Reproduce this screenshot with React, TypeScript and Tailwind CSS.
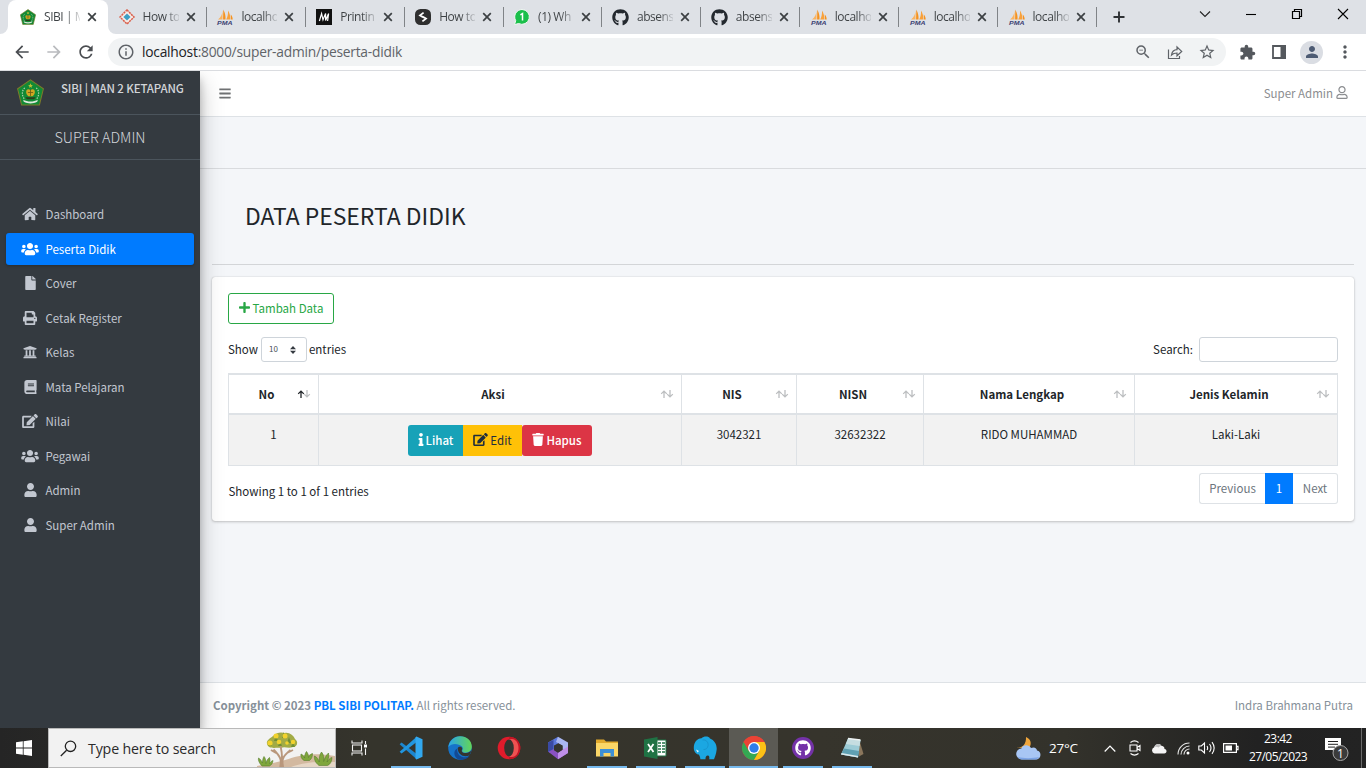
import React from "react";
import {
  FaBars, FaBook, FaEdit, FaFile, FaGithub, FaHome, FaInfo, FaPlus, FaPrint,
  FaRegUser, FaTrash, FaUniversity, FaUser, FaUsers,
} from "react-icons/fa";
import {
  MdArrowBack, MdArrowForward, MdExtension, MdInfoOutline, MdMoreVert, MdPerson,
  MdRefresh, MdStarBorder, MdZoomOut,
} from "react-icons/md";

/* ---------- favicons ---------- */

const Emblem = ({ className }: { className: string }) => (
  <svg viewBox="0 0 26 26" className={className}>
    <path d="M13 .8 25.400 9.400 21.600 25H4.400L.6 9.400Z" fill="#128a35" stroke="#7d7a2a" strokeWidth="1" />
    <path d="M6 20c4 2.300 10 2.300 14 0l-.5 2c-4 2-9 2-13 0Z" fill="#dfe9dc" />
    <path d="M9 11c1.200-1.500 2.800-1.200 4-.2 1.200-1 2.800-1.300 4 .2.8 2.500-.6 4.600-2 5.500h-4c-1.400-.9-2.800-3-2-5.500Z" fill="#d0a622" />
    <path d="M8 17.500h10l-1.500 2h-7Z" fill="#2b3d1c" />
    <path d="M13 10.500v6M10.500 13h5" stroke="#6f5c14" strokeWidth=".8" />
    <path d="m13 4.200.7 1.500 1.600.1-1.200 1.100.4 1.600L13 7.700l-1.500.8.4-1.600-1.200-1.100 1.600-.1Z" fill="#b9bf36" />
    <path d="M7.500 8.500C4.500 11 4.500 16 7 19M18.500 8.500c3 2.500 3 7.500.5 10.500" fill="none" stroke="#b8d6b4" strokeWidth="1.100" strokeDasharray="1.400 1.100" />
  </svg>
);

const Diamond = () => (
  <svg viewBox="0 0 16 16" className="h-4 w-4">
    <path d="M8 1 15 8 8 15 1 8Z" fill="#f7ece8" stroke="#d9604c" strokeWidth="1.500" strokeDasharray="2.200 .7" />
    <path d="M8 4.400 11.600 8 8 11.600 4.400 8Z" fill="#3d9fc4" />
  </svg>
);

const Pma = () => (
  <svg viewBox="0 0 18 16" className="h-4 w-[18px]">
    <path d="M6.500 1.200C6.600 5 4.800 8.600 2 10.400h4.500Z" fill="#fbb35f" />
    <path d="M7.300.4c2 3.600 2.400 7 2.200 10H7.100Z" fill="#f6921e" />
    <path d="M12 1.600c1.600 2.400 2.500 5.800 2.400 8.800H10.200C11.700 8 12.200 5 12 1.600Z" fill="#f9a13a" />
    <path d="M14.700 5.500c1.300 1.200 1.900 3 2 4.900h-1.700Z" fill="#f6921e" />
    <text x="1" y="15.800" textLength="15.500" lengthAdjust="spacingAndGlyphs" className="fill-[#3c4173]" fontFamily="Liberation Sans, sans-serif" fontSize="6" fontWeight="700" fontStyle="italic">PMA</text>
  </svg>
);

const MSquare = () => (
  <svg viewBox="0 0 16 16" className="h-4 w-4">
    <rect width="16" height="16" fill="#111" />
    <path d="M3.400 12 5.600 4.600 7 10.800 9.600 4.600V11.400L12.600 4.600 11.600 12" fill="none" stroke="#fff" strokeWidth="1.200" />
  </svg>
);

const SRound = () => (
  <svg viewBox="0 0 16 16" className="h-4 w-4">
    <rect width="16" height="16" rx="5.500" fill="#2f2f2f" />
    <path d="M8.600 3.600 5 6.400 7.600 8M7.400 12.400 11 9.600 8.400 8M6.600 7.400 9.400 8.600" fill="none" stroke="#fff" strokeWidth="1.800" />
  </svg>
);

const WhatsAppBadge = () => (
  <svg viewBox="0 0 16 16" className="h-4 w-4">
    <path d="M8 .5a7.400 7.400 0 1 1-3.400 14L.6 15.600 1.700 11.600A7.400 7.400 0 0 1 8 .5Z" fill="#1bbf4b" stroke="#f4f7f5" strokeWidth="1" />
    <path d="M6.400 5.800 8.500 4.500V11.500" fill="none" stroke="#fff" strokeWidth="1.500" />
  </svg>
);

const Octocat = () => <FaGithub className="h-[17px] w-[17px] text-[#24292f]" />;

/* ---------- browser chrome ---------- */

const CloseX = () => (
  <svg viewBox="0 0 10 10" className="h-2.5 w-2.5 shrink-0">
    <path d="M1.200 1.200 8.800 8.800M8.800 1.200 1.200 8.800" stroke="#3c4043" strokeWidth="1.700" />
  </svg>
);

const tabs: { icon: React.ReactNode; text: string }[] = [
  { icon: <Diamond />, text: "How to" },
  { icon: <Pma />, text: "localho" },
  { icon: <MSquare />, text: "Printin" },
  { icon: <SRound />, text: "How to" },
  { icon: <WhatsAppBadge />, text: "(1) Wh" },
  { icon: <Octocat />, text: "absens" },
  { icon: <Octocat />, text: "absens" },
  { icon: <Pma />, text: "localho" },
  { icon: <Pma />, text: "localho" },
  { icon: <Pma />, text: "localho" },
];

const tabText =
  "ml-[7px] w-9 shrink-0 whitespace-nowrap bg-linear-to-r from-[#3c4043] from-60% to-[#3c4043]/15 bg-clip-text text-[12px] leading-4 tracking-[-0.45px] text-transparent";

function TabStrip() {
  return (
    <div className="flex h-[34px] shrink-0 bg-[#dee1e6] pl-2">
      <div className="relative flex w-[100px] shrink-0 items-center rounded-t-[8px] bg-white pl-3">
        <svg viewBox="0 0 8 8" className="absolute -left-2 bottom-0 h-2 w-2"><path d="M8 0V8H0A8 8 0 0 0 8 0Z" fill="#fff" /></svg>
        <svg viewBox="0 0 8 8" className="absolute -right-2 bottom-0 h-2 w-2"><path d="M0 0V8H8A8 8 0 0 1 0 0Z" fill="#fff" /></svg>
        <Emblem className="mr-px h-4 w-4" />
        <span className={tabText}>SIBI | M</span>
        <span className="ml-[7px] flex"><CloseX /></span>
      </div>
      {tabs.map((t, i) => (
        <div key={i} className="flex w-[98.9px] shrink-0 items-center">
          <div className="flex w-[97.9px] items-center pl-[9.500px]">
            <span className="flex w-[18px] shrink-0 justify-center">{t.icon}</span>
            <span className={tabText}>{t.text}</span>
            <span className="ml-[7px] flex"><CloseX /></span>
          </div>
          <div className="h-5 w-px bg-[#808387]" />
        </div>
      ))}
      <svg viewBox="0 0 12 12" className="ml-4 mt-[11px] h-3 w-3"><path d="M6 .5v11M.5 6h11" stroke="#2f3235" strokeWidth="1.900" /></svg>
      <div className="ml-auto flex pr-[17px] pt-[8px] text-black">
        <svg viewBox="0 0 12 12" className="h-3 w-3"><path d="m1 3.500 5 5 5-5" fill="none" stroke="#222" strokeWidth="1.100" /></svg>
        <svg viewBox="0 0 12 12" className="ml-[34px] h-3 w-3"><path d="M1 6.500h10" stroke="#000" strokeWidth="1.100" /></svg>
        <svg viewBox="0 0 12 12" className="ml-[34px] h-3 w-3"><path d="M1.500 3.500h7v7h-7ZM3.500 3.500v-2h7v7h-2" fill="none" stroke="#000" strokeWidth="1.200" /></svg>
        <svg viewBox="0 0 12 12" className="ml-[34px] h-3 w-3"><path d="m1 1 10 10M11 1 1 11" stroke="#000" strokeWidth="1.100" /></svg>
      </div>
    </div>
  );
}

function Toolbar() {
  return (
    <div className="flex h-[37px] shrink-0 items-center border-b border-[#dadce0] bg-white pl-3">
      <MdArrowBack className="h-5 w-5 text-[#4a4d51]" />
      <MdArrowForward className="ml-3 h-5 w-5 text-[#b9bbbe]" />
      <MdRefresh className="ml-3 h-5 w-5 text-[#4a4d51]" />
      <div className="ml-3 flex h-7 w-[1118px] items-center rounded-full bg-[#f1f3f4] pl-[9px] pr-2.5 text-[#5f6368]">
        <MdInfoOutline className="h-[18px] w-[18px]" />
        <span className="ml-[7px] whitespace-nowrap text-[13.800px] leading-5 tracking-[-0.240px]">
          <span className="text-[#202124]">localhost</span>:8000/super-admin/peserta-didik
        </span>
        <MdZoomOut className="ml-auto h-[18px] w-[18px]" />
        <svg viewBox="0 0 16 16" className="ml-[15px] h-4 w-4">
          <path d="M1.500 5.500v9h11V12M4.500 11c.6-3.500 2.500-5.200 5.500-5.300V3l4.700 4.400L10 11.800V9C7.600 9 5.800 9.700 4.500 11Z" fill="none" stroke="#5f6368" strokeWidth="1.200" />
        </svg>
        <MdStarBorder className="ml-[15px] h-[18px] w-[18px]" />
      </div>
      <MdExtension className="ml-[13px] h-[17px] w-[17px] text-[#54585d]" />
      <svg viewBox="0 0 14 14" className="ml-4 h-3.5 w-3.5"><path d="M1 1h12v12H1Z" fill="none" stroke="#54585d" strokeWidth="1.800" /><path d="M8.500 0H14v14H8.500Z" fill="#54585d" /></svg>
      <span className="ml-[14px] flex h-[23px] w-[23px] items-center justify-center rounded-full bg-[#dadde3]">
        <MdPerson className="h-[18px] w-[18px] text-[#4d5b73]" />
      </span>
      <MdMoreVert className="ml-[12px] h-5 w-5 text-[#54585d]" />
    </div>
  );
}

/* ---------- sidebar ---------- */

const menu: { label: string; icon: React.ReactNode; active?: boolean }[] = [
  { label: "Dashboard", icon: <FaHome className="h-3.5 w-4" /> },
  { label: "Peserta Didik", icon: <FaUsers className="h-3.5 w-[18px]" />, active: true },
  { label: "Cover", icon: <FaFile className="h-3.5 w-[11px]" /> },
  { label: "Cetak Register", icon: <FaPrint className="h-3.5 w-3.5" /> },
  { label: "Kelas", icon: <FaUniversity className="h-3.5 w-3.5" /> },
  { label: "Mata Pelajaran", icon: <FaBook className="h-3.5 w-[13px]" /> },
  { label: "Nilai", icon: <FaEdit className="h-3.5 w-4" /> },
  { label: "Pegawai", icon: <FaUsers className="h-3.5 w-[18px]" /> },
  { label: "Admin", icon: <FaUser className="h-3.5 w-[13px]" /> },
  { label: "Super Admin", icon: <FaUser className="h-3.5 w-[13px]" /> },
];

function Sidebar() {
  return (
    <aside className="relative z-10 flex w-[200px] shrink-0 flex-col bg-[#343a40] text-[#c2c7d0] shadow-[0_11px_22px_rgba(0,0,0,0.25),0_8px_8px_rgba(0,0,0,0.22)]">
      <div className="flex h-[44px] shrink-0 border-b border-[#4b545c] pl-[17px]">
        <Emblem className="mt-2 h-[27px] w-[27px]" />
        <span className="ml-[17px] mt-[8px] whitespace-nowrap text-[11.5px] font-medium leading-[18px] tracking-[-0.14px] text-[#d2d5d9]">SIBI | MAN 2 KETAPANG</span>
      </div>
      <div className="flex h-[45px] shrink-0 items-center justify-center border-b border-[#4b545c] text-[14.4px] font-light text-[#d2d5da]">SUPER ADMIN</div>
      <nav className="mt-[38px] flex flex-col gap-[2.5px] px-1.5">
        {menu.map((m) => (
          <a
            key={m.label}
            className={
              m.active
                ? "flex h-8 items-center rounded-[3px] bg-[#007bff] pl-[15px] text-white shadow-[0_1px_3px_rgba(0,0,0,0.24)]"
                : "flex h-8 items-center pl-[15px]"
            }
          >
            <span className="flex w-[18px] justify-center">{m.icon}</span>
            <span className="ml-[6.500px] whitespace-nowrap text-[11.5px] leading-4">{m.label}</span>
          </a>
        ))}
      </nav>
    </aside>
  );
}

/* ---------- table ---------- */

const SortArrows = ({ active }: { active?: boolean }) => (
  <svg viewBox="0 0 14 8" className="absolute right-[7px] top-[15px] h-2 w-3.5">
    <path d="M4 8V1.200M1.200 3.900 4 1.100 6.800 3.900" fill="none" stroke={active ? "#212529" : "#bcbec0"} strokeWidth="1.300" />
    <path d="M10 0v6.800M7.200 4.100 10 6.900l2.800-2.800" fill="none" stroke="#bcbec0" strokeWidth="1.300" />
  </svg>
);

const headers = ["No", "Aksi", "NIS", "NISN", "Nama Lengkap", "Jenis Kelamin"];
const cols = "grid grid-cols-[90px_363px_115px_127px_211px_203px]";

function DataTable() {
  return (
    <div className="w-[1110px] border-l border-[#dee2e6]">
      <div className={`${cols} h-[42px] border-y-2 border-[#dee2e6]`}>
        {headers.map((h, i) => (
          <div key={h} className="relative flex items-center justify-center border-r border-[#dee2e6] pr-[14px] pb-px font-bold">
            {h}
            <SortArrows active={i === 0} />
          </div>
        ))}
      </div>
      <div className={`${cols} h-[51px] border-b border-[#dee2e6] bg-[#f2f2f2] text-center`}>
        <div className="border-r border-[#dee2e6] pt-[9px]">1</div>
        <div className="flex justify-center border-r border-[#dee2e6] pt-[10px]">
          <button className="flex h-[31px] w-[55px] items-center justify-center rounded-l-[3px] bg-[#17a2b8] pb-0.5 font-medium text-white">
            <FaInfo className="mr-[2px] h-[13px] w-[6px]" />Lihat
          </button>
          <button className="flex h-[31px] w-[59px] items-center justify-center bg-[#ffc107] pb-0.5 text-[#1f2d3d]">
            <FaEdit className="mr-[2px] h-[13px] w-[15px]" />Edit
          </button>
          <button className="flex h-[31px] w-[70px] items-center justify-center rounded-[3px] bg-[#dc3545] pb-0.5 font-medium text-white">
            <FaTrash className="mr-[2px] h-[13px] w-[12px]" />Hapus
          </button>
        </div>
        <div className="border-r border-[#dee2e6] pt-[9px]">3042321</div>
        <div className="border-r border-[#dee2e6] pt-[9px]">32632322</div>
        <div className="border-r border-[#dee2e6] pt-[9px]">RIDO MUHAMMAD</div>
        <div className="border-r border-[#dee2e6] pt-[9px]">Laki-Laki</div>
      </div>
    </div>
  );
}

function Content() {
  return (
    <main className="flex min-w-0 flex-1 flex-col bg-[#f4f6f9] text-[11.5px] leading-[20px] text-[#212529]">
      <header className="flex h-[46px] shrink-0 items-center justify-between border-b border-[#dee2e6] bg-white pl-[19px] pr-[18px] text-[#8b8d90]">
        <FaBars className="h-[13px] w-3 text-[#6f7173]" />
        <span className="flex items-center gap-[3px] pb-0.5">
          Super Admin <FaRegUser className="h-[13px] w-[12px]" />
        </span>
      </header>
      <div className="h-[52px] shrink-0 border-b border-[#d9dbde]" />
      <div className="mx-3 flex h-[96px] shrink-0 items-center border-b border-[#d3d5d8] pb-1 pl-[33px]">
        <h1 className="whitespace-nowrap text-[22.9px] leading-8">DATA PESERTA DIDIK</h1>
      </div>
      <section className="mx-3 mt-3 h-[244px] shrink-0 rounded-[3px] bg-white px-4 pt-4 shadow-[0_0_1px_rgba(0,0,0,0.25),0_1px_3px_rgba(0,0,0,0.2)]">
        <button className="flex h-[31px] w-[106px] items-center justify-center rounded-[3px] border border-[#28a745] pb-0.5 text-[#28a745]">
          <FaPlus className="mr-[3px] h-[13px] w-[11px]" />Tambah Data
        </button>
        <div className="mt-[13px] flex h-[25px] items-center justify-between">
          <div className="flex items-center">
            <span className="pb-0.5">Show</span>
            <span className="ml-[3px] mr-0.5 flex h-[25px] w-[46px] items-center justify-between rounded-[3px] border border-[#ced4da] pl-[7px] pr-[10px] text-[8px] text-[#495057]">
              <span className="pb-0.5">10</span>
              <svg viewBox="0 0 6 8" className="h-2 w-1.5"><path d="M3 0 6 3.300H0ZM3 8 0 4.700H6Z" fill="#343a40" /></svg>
            </span>
            <span className="pb-0.5">entries</span>
          </div>
          <div className="flex items-center">
            <span className="pb-0.5">Search:</span>
            <span className="ml-1.5 h-[25px] w-[139px] rounded-[3px] border border-[#ced4da] bg-white" />
          </div>
        </div>
        <div className="mt-[11px]"><DataTable /></div>
        <div className="mt-[7px] flex justify-between">
          <span className="pt-[8px] pl-[0.5px]">Showing 1 to 1 of 1 entries</span>
          <div className="flex h-[31px] text-[#6c757d]">
            <span className="flex w-[66px] items-center justify-center rounded-l-[3px] border border-r-0 border-[#dee2e6] pb-px">Previous</span>
            <span className="flex w-[28px] items-center justify-center bg-[#007bff] pb-px text-white">1</span>
            <span className="flex w-[45px] items-center justify-center rounded-r-[3px] border border-l-0 border-[#dee2e6] pb-px">Next</span>
          </div>
        </div>
      </section>
      <footer className="mt-auto flex h-[46px] shrink-0 items-center justify-between border-t border-[#dee2e6] bg-white pb-0.5 pl-[13px] pr-[13px] text-[#869099]">
        <span className="tracking-[-0.02px]"><b>Copyright © 2023 <span className="text-[#007bff]">PBL SIBI POLITAP.</span></b> All rights reserved.</span>
        <span>Indra Brahmana Putra</span>
      </footer>
    </main>
  );
}

/* ---------- taskbar ---------- */

const Plants = () => (
  <svg viewBox="0 0 78 38" className="h-[38px] w-[78px]">
    <path d="M0 37c10-2 18-3 28-6 14-5 28-8 50-4v11H0Z" fill="#d3b9a0" />
    <path d="M34 38c10-4 26-6 44-5v5Z" fill="#e6d6c5" />
    <path d="M10 15c-1-4 4-6 6-8 4-4 8-4 12-3 4-1 9 3 10 6 4 3 2 8-2 8-5 2-8-1-12 1-5-1-12 2-14-4Z" fill="#a2ab45" />
    <g fill="#6f8f35"><path d="m11 17 2-5 2 5ZM17 12l2-6 2 6ZM25 9l1.500-6L28 9ZM30 14l2-6 2 6ZM34 18l2-5 2 5ZM21 17l2-5 2 5Z" /></g>
    <path d="M23.500 38c1-7 .5-10-7-17.500M25 38c-.6-9 2.500-12 8.500-17M24.800 30c.6-5-.3-8-1.300-13M19 24l-5-3M30 24l6-3" fill="none" stroke="#b9977c" strokeWidth="1.900" />
    <path d="M22.500 38 24 27h1.500l1.500 11Z" fill="#b9977c" />
    <g fill="#f2d22e"><circle cx="13" cy="14" r="2.600" /><circle cx="19" cy="7" r="2.500" /><circle cx="28" cy="7" r="2.500" /><circle cx="36" cy="13" r="2.200" /><circle cx="22" cy="13" r="2.300" /><circle cx="30" cy="14" r="1.800" /></g>
    <g fill="#7fa63c" stroke="#557d2c" strokeWidth=".6">
      <path d="M5 37C2 34 1 31 1.500 29c2 1 3 3 4 5 0-3 .5-5 1.500-6.500C8.500 29 9 32 9 34.500c.5-2.500 1.500-4.500 3.500-6 .8 2 .5 4 0 6 1-1.500 2-2.500 3.500-3-.3 2.500-1.500 4.500-3.500 5.500Z" />
      <path d="M47 31.500c-2.500-1.500-3.500-4-3-6.500 1.800.8 2.800 2 3.500 4 .2-3 .8-5 2-6.500 1.500 1.800 2 4 2 6 .8-1.800 2-3.500 4-4 0 3-1 5.500-3 7Z" />
      <path d="M62 36.500c-3.500-2.500-5-6-4.500-9.500 2.500 1 4 3.500 4.800 6-.3-4 .3-7.500 2.200-10 2.200 2.500 2.700 6 2.200 9.500 1-3.500 2.500-6.500 4.800-8.500.8 3.500-.5 7-1.500 9 1.200-2 2.800-4 5-4.500 0 4-2 7-4.500 8Z" />
    </g>
  </svg>
);

const VsCode = () => (
  <svg viewBox="0 0 24 24" className="h-6 w-6">
    <path d="m.6 8.200 2-1.700L18 18.200v5.300Z" fill="#1c86cf" />
    <path d="m.6 15.800 2 1.700L18 5.800V.5Z" fill="#2196df" />
    <path d="M17.500.5 23.500 3.200V20.800l-6 2.700-1-1V1.500Z" fill="#32a9f0" />
  </svg>
);

const Edge = () => (
  <svg viewBox="0 0 24 24" className="h-6 w-6">
    <defs><linearGradient id="eg" x1="0" x2="1"><stop offset="0" stopColor="#2aa5e8" /><stop offset="1" stopColor="#63d657" /></linearGradient></defs>
    <circle cx="12" cy="12" r="11.800" fill="#1673c9" />
    <path d="M.3 11C1.500 4.500 6.200.2 12 .2c7 0 11.800 4.800 11.800 10.300 0 4-2.800 6.200-6.300 6.200-2.800 0-3.800-1.200-3.300-2.200 1-1.400.8-3-.4-4.200C11 7.500 3.500 6.500.3 11Z" fill="url(#eg)" />
    <path d="M9.200 12.600c-.6 5 3 9 8.600 8.600 1.600-.2 3-.8 4-1.400-2.200 3-6 4.600-10 4-5.500-1.200-7.600-8.600-2.600-11.200Z" fill="#134a94" />
    <path d="M9.700 12c1-1.700 3.600-1.700 4.400 0 .4 1.400-.6 2.200-.3 3.200.6 1.700 3 2.400 6 1.500 1.600-.5 2.600-1.200 3.500-2.100-.3 1.900-.9 3.500-1.800 4.700-5 2.600-11.800-.3-11.800-7.300Z" fill="#34342f" />
  </svg>
);

const Opera = () => (
  <svg viewBox="0 0 24 24" className="h-6 w-6">
    <circle cx="12" cy="12" r="11.300" fill="#e01b2b" />
    <path d="M12 .7a11.300 11.300 0 0 1 0 22.600Z" fill="#c41424" />
    <path d="M12 3.600c6-2.500 9.500 3 9.500 8.400S18 22.900 12 20.400Z" fill="#ee5252" />
    <ellipse cx="12" cy="12" rx="4.800" ry="8.400" fill="#34342f" />
  </svg>
);

const M365 = () => (
  <svg viewBox="0 0 22 24" className="h-6 w-[22px]">
    <path d="M1 6.500 11 .8v7L7 10.300v8L1 15.800Z" fill="#5b78dc" />
    <path d="M11 .8 21 6.500V17l-5.500-3V9.500L9 6Z" fill="#a9b7f2" />
    <path d="M1 15.500 6.500 13l4.500 3.600 5.500-3L21 17l-10 6.300Z" fill="#8a51c2" />
    <path d="M16 13.500 21 10.500V17l-10 6.300v-6.500Z" fill="#c08fe8" />
    <path d="M1 6.500 6.500 4v9L1 16Z" fill="#3a4aa4" />
    <path d="M7 9.600 11 7.400l4.500 2.400v4L11 16.700 7 14.300Z" fill="#34342f" />
  </svg>
);

const Explorer = () => (
  <svg viewBox="0 0 24 20" className="h-5 w-6">
    <path d="M1 1.500h8l2 2h12v4H1Z" fill="#e2a92c" />
    <path d="M1 5h22v13.500H1Z" fill="#fbd667" />
    <path d="M5 18.500V11h14v7.500h-3.500V15h-7v3.500Z" fill="#3d8fd6" />
  </svg>
);

const Excel = () => (
  <svg viewBox="0 0 23 22" className="h-[22px] w-[23px]">
    <path d="M12 3h10v16H12Z" fill="#fff" stroke="#1f7244" />
    <path d="M14 6h3M18 6h3M14 9h3M18 9h3M14 12h3M18 12h3M14 15h3M18 15h3" stroke="#1f7244" strokeWidth="1.600" />
    <path d="M0 2.500 13.500 0v22L0 19.500Z" fill="#1f7244" />
    <path d="m4 7 5.500 8M9.500 7 4 15" stroke="#fff" strokeWidth="1.800" />
  </svg>
);

const Elephant = () => (
  <svg viewBox="0 0 24 24" className="h-6 w-6">
    <path d="M.8 12C.8 6 4 2.500 8.500 2.200 10.500.2 15.500-.2 17 2.400 21.500 4 24.300 9 23.600 14c-.3 3.500-1.600 6.500-2.600 9.300h-4.800c.3-2 .2-3.500-1.200-3.700-1.700-.2-2.600 1.400-2.500 3.700H7.400c-.2-1.800-.6-3.300-1.600-4.800C3.500 18.500.8 16 .8 12Z" fill="#1ba7e2" />
    <path d="M9.500 4c3.500-.5 6 2 5.600 5.500-.3 2.600-2.200 4.300-4.600 4" fill="none" stroke="#1793cc" strokeWidth=".9" />
    <path d="m3 13.500 3 1.500-1.500 1.600Z" fill="#e8f5fb" />
  </svg>
);

const Chrome = () => (
  <svg viewBox="0 0 24 24" className="h-6 w-6">
    <circle cx="12" cy="12" r="12" fill="#ea4335" />
    <path d="M1.600 6A12 12 0 0 0 12 24l5.200-9H6.800Z" fill="#34a853" />
    <path d="M12 24A12 12 0 0 0 22.400 6H12l5.200 9Z" fill="#fbc116" />
    <path d="M1.600 6A12 12 0 0 1 22.400 6H12Z" fill="#ea4335" />
    <circle cx="12" cy="12" r="6" fill="#fff" />
    <circle cx="12" cy="12" r="4.700" fill="#2f7de9" />
  </svg>
);

const GithubDesktop = () => (
  <span className="flex h-[22px] w-[22px] items-center justify-center rounded-full bg-[#7432a8]">
    <FaGithub className="h-4 w-4 text-white" />
  </span>
);

const Notepad = () => (
  <svg viewBox="0 0 24 22" className="h-[22px] w-6">
    <path d="M19 2 23.500 17 19 19.500Z" fill="#8a765c" />
    <path d="M8 1.500 20.500 3 18 20.500 1 17.500Z" fill="#9ccbd6" />
    <path d="M8 1.500 20.500 3 19.600 9 5.800 7Z" fill="#c6dde1" />
    <path d="M4 11.500 19 14 18 20.500 1 17.500Z" fill="#5fa0b2" />
    <path d="M1 17.500 18 20.500 18.200 19 1.600 16Z" fill="#dbe9ec" />
    <path d="M8 1.500 20.500 3" stroke="#eef3f3" strokeWidth="1.400" />
  </svg>
);

const apps: { icon: React.ReactNode; open?: boolean; active?: boolean }[] = [
  { icon: <VsCode />, open: true },
  { icon: <Edge /> },
  { icon: <Opera /> },
  { icon: <M365 /> },
  { icon: <Explorer />, open: true },
  { icon: <Excel />, open: true },
  { icon: <Elephant />, open: true },
  { icon: <Chrome />, active: true },
  { icon: <GithubDesktop />, open: true },
  { icon: <Notepad />, open: true },
];

function Taskbar() {
  return (
    <footer className="flex h-10 shrink-0 bg-[linear-gradient(90deg,#252525_0%,#35342c_27%,#36342c_60%,#33322b_78%,#222222_92%,#232323_100%)] text-white">
      <div className="flex w-12 shrink-0 items-center justify-center">
        <svg viewBox="0 0 16 16" className="h-4 w-4"><path d="M0 2.300 6.800 1.300V7.600H0ZM7.600 1.200 16 0V7.600H7.600ZM0 8.400H6.800V14.700L0 13.700ZM7.600 8.400H16V16L7.600 14.800Z" fill="#fff" /></svg>
      </div>
      <div className="flex w-[288px] shrink-0 items-center border border-[#b9b9b9] bg-[#f2f2f2] pl-[11px] text-[#2b2b2b]">
        <svg viewBox="0 0 17 17" className="h-[17px] w-[17px]"><circle cx="10.500" cy="6.300" r="5.200" fill="none" stroke="#222" strokeWidth="1.300" /><path d="M6.600 10.200.8 16" stroke="#222" strokeWidth="1.300" /></svg>
        <span className="ml-[11px] whitespace-nowrap pt-0.5 text-[14.200px] leading-5 tracking-[-0.150px]">Type here to search</span>
        <span className="ml-auto flex self-end"><Plants /></span>
      </div>
      <div className="flex w-[50px] shrink-0 items-center justify-center">
        <svg viewBox="0 0 17 16" className="mr-1 h-4 w-[17px]">
          <path d="M1 .5V3h10V.5M1 15.500V13h10v2.500M1.500 5h9v6h-9Z" fill="none" stroke="#f2f2f2" strokeWidth="1.100" />
          <path d="M14.500 1v3M14.500 8.500V15" stroke="#f2f2f2" strokeWidth="1.100" /><path d="M13 4.500h3v3h-3Z" fill="#fff" />
        </svg>
      </div>
      <div className="flex">
        {apps.map((a, i) => (
          <div key={i} className={a.active ? "flex w-[49px] flex-col items-center bg-[#5b5a54]" : "flex w-[49px] flex-col items-center"}>
            <span className="flex h-[38px] items-center pt-px">{a.icon}</span>
            <span className={a.active ? "h-0.5 w-full bg-[#76b9ed]" : a.open ? "h-0.5 w-10 bg-[#76b9ed]" : "h-0.5"} />
          </div>
        ))}
      </div>
      <div className="ml-auto flex items-center">
        <svg viewBox="0 0 25 23" className="h-[23px] w-[25px]">
          <path d="M10 0c5 2 6 7 3 11L1 10.500C4.500 11.500 10.500 8.500 10 0Z" fill="#f0a63c" />
          <path d="M6 22.500a5.500 5.500 0 0 1-.6-11C6.500 7.500 13 7 15 11c3-1.500 6 0 6 2.600C26 14 25.500 22.500 20 22.500Z" fill="#a8c6f4" />
          <path d="M2 20c5 1.500 15 1.500 21 0-1 1.500-2 2.500-4 2.500H6C4 22.500 2.500 21.500 2 20Z" fill="#7ba3e6" />
        </svg>
        <span className="ml-[8px] w-[30px] whitespace-nowrap pt-px text-[13.500px] tracking-[-0.200px]">27°C</span>
        <svg viewBox="0 0 12 7" className="ml-[25px] h-[7px] w-3"><path d="m.7 6.500 5.300-5.500 5.300 5.500" fill="none" stroke="#fff" strokeWidth="1.200" /></svg>
        <svg viewBox="0 0 14 16" className="ml-[12px] h-4 w-3.5">
          <path d="M2 5h7v6H2ZM9 7.500 12 5.500v5L9 8.500M2.500 2.500c2.500-2 5.500-2 8 0M2.500 13.500c2.500 2 5.500 2 8 0" fill="none" stroke="#fff" strokeWidth="1.100" />
        </svg>
        <svg viewBox="0 0 16 11" className="ml-[9px] h-[11px] w-4">
          <path d="M3.500 10.500a3.300 3.300 0 0 1-.3-6.300C4.500.5 9 0 10.500 3c3 0 3 2.500 3 3 3 .5 2.500 4.500-.3 4.500Z" fill="#f4f4f4" />
          <path d="M3.200 4.200C4.500.5 9 0 10.500 3 9 3 8.500 3.500 7.800 4.500 6 3.700 4.500 3.700 3.200 4.200Z" fill="#bdbdbd" />
        </svg>
        <svg viewBox="0 0 13 13" className="ml-[10px] h-[13px] w-[13px]">
          <path d="M1 12.500C1 6 6 1 12.500 1M4 12.500C4 8 8 4 12.500 4M7 12.500C7 9.500 9.500 7 12.500 7" fill="none" stroke="#e6e6e6" strokeWidth="1.100" /><circle cx="11" cy="11" r="1.500" fill="#fff" />
        </svg>
        <svg viewBox="0 0 17 14" className="ml-[8px] h-3.5 w-[17px]">
          <path d="M.8 5h2.500L6.500 2v10L3.300 9H.8ZM9 5c.8 1.200.8 2.800 0 4M11.500 3c1.800 2.400 1.800 5.600 0 8M14 1.200c2.600 3.500 2.600 8.100 0 11.600" fill="none" stroke="#fff" strokeWidth="1.100" />
        </svg>
        <svg viewBox="0 0 16 10" className="ml-[8px] h-2.5 w-4">
          <path d="M.6.600H13.400V9.400H.600ZM13.500 3.300h1.500v3.400h-1.500" fill="none" stroke="#fff" strokeWidth="1.200" /><path d="M2.500 2.500h6.500v5H2.500Z" fill="#fff" />
        </svg>
        <div className="ml-[7px] w-[64px] whitespace-nowrap pb-px text-center text-[12px] leading-[18px] tracking-[-0.55px]">
          23:42<br />27/05/2023
        </div>
        <div className="relative ml-[15px] h-[26px] w-[25px]">
          <svg viewBox="0 0 25 26" className="h-[26px] w-[25px]">
            <path d="M0 3h16v12h-5v3.500L7.500 15H0Z" fill="#fff" />
            <path d="M3 6.500h10M3 9.300h10M3 12.100h7" stroke="#222" strokeWidth="1" />
            <circle cx="15.500" cy="18" r="7.500" fill="#3b3b3b" stroke="#a8a8a8" />
          </svg>
          <span className="absolute left-[12px] top-[10px] text-[12px] leading-[17px]">1</span>
        </div>
        <div className="ml-[11px] h-10 w-px bg-[#6a6a6a]" />
        <div className="w-1" />
      </div>
    </footer>
  );
}

export default function App() {
  return (
    <div className="flex h-screen w-full flex-col overflow-hidden bg-white font-['Open_Sans','Noto_Sans',sans-serif]">
      <TabStrip />
      <Toolbar />
      <div className="flex min-h-0 flex-1 overflow-hidden font-['Noto_Sans_CJK_SC',sans-serif]">
        <Sidebar />
        <Content />
      </div>
      <Taskbar />
    </div>
  );
}
